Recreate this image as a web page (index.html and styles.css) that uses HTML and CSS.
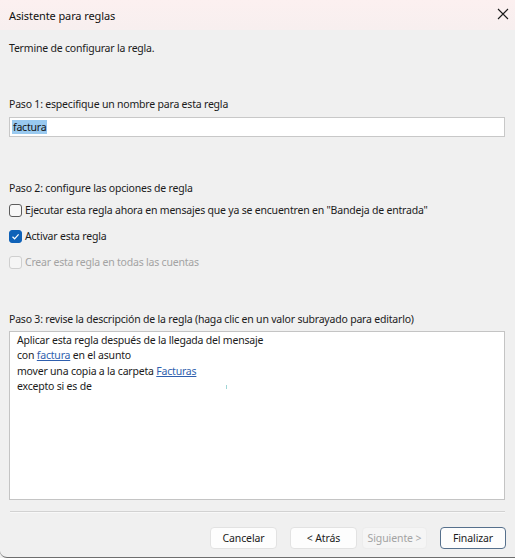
FILE: index.html
```html
<!DOCTYPE html>
<html lang="es">
<head>
<meta charset="utf-8">
<title>Asistente para reglas</title>
<link rel="stylesheet" href="styles.css">
</head>
<body>
<div class="window">
  <div class="titlebar">
    <span class="title">Asistente para reglas</span>
    <svg class="close" width="12" height="12" viewBox="0 0 12 12"><path d="M1 1 L11 11 M11 1 L1 11" stroke="#1a1a1a" stroke-width="1.1" fill="none"/></svg>
  </div>
  <div class="content">
    <div class="line intro">Termine de configurar la regla.</div>
    <div class="line step1">Paso 1: especifique un nombre para esta regla</div>
    <div class="input"><span class="sel">factura</span></div>
    <div class="line step2">Paso 2: configure las opciones de regla</div>
    <div class="cbrow"><span class="cb"></span><span>Ejecutar esta regla ahora en mensajes que ya se encuentren en "Bandeja de entrada"</span></div>
    <div class="cbrow"><span class="cb checked"><svg width="9" height="9" viewBox="0 0 9 9"><path d="M1.5 4.8 L3.6 6.8 L7.6 2.4" stroke="#fff" stroke-width="1.2" fill="none"/></svg></span><span>Activar esta regla</span></div>
    <div class="cbrow disabled"><span class="cb"></span><span>Crear esta regla en todas las cuentas</span></div>
    <div class="line step3">Paso 3: revise la descripción de la regla (haga clic en un valor subrayado para editarlo)</div>
    <div class="desc">
      <div>Aplicar esta regla después de la llegada del mensaje</div>
      <div>con <a class="lnk">factura</a> en el asunto</div>
      <div>mover una copia a la carpeta <a class="lnk">Facturas</a></div>
      <div>excepto si es de<span class="mark"></span></div>
    </div>
    <div class="sep"></div>
    <div class="buttons">
      <button class="btn cancel">Cancelar</button>
      <button class="btn back">&lt; Atrás</button>
      <button class="btn next" disabled>Siguiente &gt;</button>
      <button class="btn finish">Finalizar</button>
    </div>
  </div>
</div>
</body>
</html>
```
FILE: styles.css
```css
html, body {
  margin: 0;
  padding: 0;
  background: #f0f0f0;
}
body {
  font-family: "Noto Sans", "Open Sans", sans-serif;
  font-size: 10.5px;
  letter-spacing: -0.2px;
  color: #1b1b1b;
}
.window {
  width: 515px;
  height: 558px;
  box-sizing: border-box;
  background: #f0f0f0;
  border-bottom: 1px solid #6e6e6e;
  border-bottom-left-radius: 7px;
  display: flex;
  flex-direction: column;
  overflow: hidden;
}
.titlebar {
  height: 30px;
  flex: none;
  display: flex;
  align-items: center;
  justify-content: space-between;
  padding: 0 6px 0 9px;
  background: linear-gradient(#fcf0f0, #f7efef);
  font-size: 11px;
  letter-spacing: -0.1px;
  color: #111;
}
.close {
  margin-top: -2px;
}
.content {
  padding: 0 10px 0 9px;
  display: flex;
  flex-direction: column;
}
.line {
  height: 15px;
  line-height: 15px;
  white-space: nowrap;
}
.intro { margin-top: 11px; }
.step1 { margin-top: 41px; }
.input {
  margin-top: 5px;
  height: 20px;
  box-sizing: border-box;
  border: 1px solid #c8c8c8;
  background: #fff;
  padding: 2px 2px;
  line-height: 14px;
}
.sel {
  background: #99c9ef;
  color: #111;
  display: inline-block;
  height: 14px;
  padding: 0 1px 0 1px;
}
.step2 { margin-top: 44px; }
.cbrow {
  height: 26px;
  display: flex;
  align-items: center;
  gap: 3px;
  white-space: nowrap;
}
.step2 + .cbrow { margin-top: 1px; }
.cb {
  width: 13px;
  height: 13px;
  box-sizing: border-box;
  border: 1px solid #5c5c5c;
  border-radius: 3px;
  background: #f7f7f7;
  display: flex;
  align-items: center;
  justify-content: center;
  flex: none;
}
.cb.checked {
  background: #0f62b8;
  border-color: #0f62b8;
}
.disabled { color: #a3a3a3; }
.disabled .cb { border-color: #cfcfcf; background: #f5f5f5; }
.step3 { margin-top: 37px; }
.desc {
  margin-top: 4px;
  height: 169px;
  box-sizing: border-box;
  border: 1px solid #c4c4c4;
  background: #fff;
  padding: 1px 7px;
  line-height: 15.3px;
}
.lnk {
  color: #2f5fae;
  text-decoration: underline;
}
.mark {
  display: inline-block;
  width: 1px;
  height: 4px;
  background: #9fd6d6;
  margin-left: 134px;
  vertical-align: middle;
}
.sep {
  margin-top: 11px;
  margin-left: 1px;
  height: 1px;
  background: #d2d2d2;
  border-bottom: 1px solid #f8f8f8;
}
.buttons {
  margin-top: 14px;
  display: flex;
  justify-content: flex-end;
}
.btn {
  height: 22px;
  box-sizing: border-box;
  font-family: inherit;
  font-size: 10.5px;
  letter-spacing: -0.1px;
  color: #1b1b1b;
  background: #fdfdfd;
  border: 1px solid #e2e2e2;
  border-radius: 4px;
  padding: 0;
}
.cancel { width: 67px; }
.back { width: 67px; margin-left: 13px; }
.next { width: 65px; margin-left: 5px; background: #f5f5f5; border-color: #ececec; color: #a3a3a3; }
.finish { width: 66px; margin-left: 13px; border-color: #56708c; margin-right: -1px; }
```
